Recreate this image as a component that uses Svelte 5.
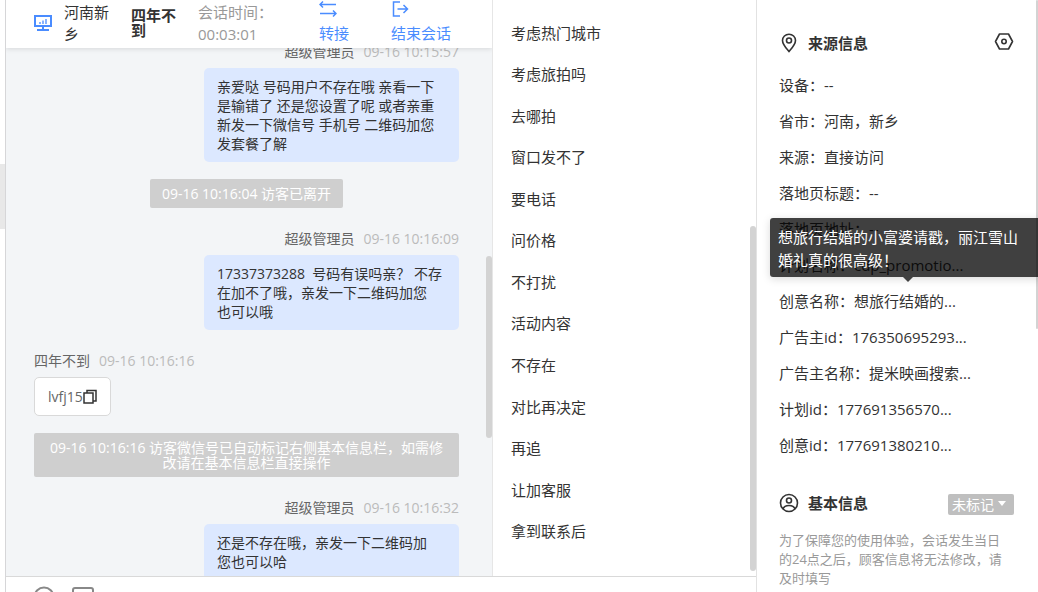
<script>
  let tag = $state('未标记')

  const messages = [
    { type: 'agent', name: '超级管理员', time: '09-16 10:15:57', text: '亲爱哒 号码用户不存在哦 亲看一下\n是输错了 还是您设置了呢 或者亲重\n新发一下微信号 手机号 二维码加您\n发套餐了解' },
    { type: 'notice', text: '09-16 10:16:04 访客已离开' },
    { type: 'agent', name: '超级管理员', time: '09-16 10:16:09', text: '17337373288\u00a0 号码有误吗亲？ 不存\n在加不了哦，亲发一下二维码加您\n也可以哦' },
    { type: 'visitor', name: '四年不到', time: '09-16 10:16:16', text: 'lvfj15' },
    { type: 'notice', wide: true, text: '09-16 10:16:16 访客微信号已自动标记右侧基本信息栏，如需修\n改请在基本信息栏直接操作' },
    { type: 'agent', name: '超级管理员', time: '09-16 10:16:32', text: '还是不存在哦，亲发一下二维码加\n您也可以哈' },
  ]

  const replies = [
    '考虑热门城市', '考虑旅拍吗', '去哪拍', '窗口发不了', '要电话', '问价格', '不打扰',
    '活动内容', '不存在', '对比再决定', '再追', '让加客服', '拿到联系后',
  ]

  const source = [
    { label: '设备', value: '--' },
    { label: '省市', value: '河南，新乡' },
    { label: '来源', value: '直接访问' },
    { label: '落地页标题', value: '--' },
    { label: '落地页地址', value: '--' },
    { label: '计划名称', value: 'cdp_promotio...' },
    { label: '创意名称', value: '想旅行结婚的...', tip: '想旅行结婚的小富婆请戳，丽江雪山\n婚礼真的很高级！' },
    { label: '广告主id', value: '176350695293...' },
    { label: '广告主名称', value: '提米映画搜索...' },
    { label: '计划id', value: '177691356570...' },
    { label: '创意id', value: '177691380210...' },
  ]
</script>

<div class="app" lang="zh-CN">
  <div class="rail"><span class="thumb"></span></div>

  <main class="main">
    <section class="chat">
      <header class="chat-head">
        <div class="place">
          <svg width="18" height="18" viewBox="0 0 18 18" fill="none" stroke="#4a8cff" stroke-width="2">
            <path d="M1 2h16v10H1z M9 12v4 M3 16h12" />
            <path d="M6 10V8 M9 10V6.500 M12 10V5" stroke-width="1.300" />
          </svg>
          <span>河南新乡</span>
        </div>
        <strong>四年不到</strong>
        <div class="duration">会话时间：<br />00:03:01</div>
        <button type="button">
          <svg width="18" height="16" viewBox="0 0 18 16" fill="none" stroke="currentColor" stroke-width="1.500">
            <path d="M17 3.500H1 M4 .5l-3 3 3 3 M1 12.500h16 M14 9.500l3 3-3 3" />
          </svg>
          转接
        </button>
        <button type="button">
          <svg width="18" height="16" viewBox="0 0 18 16" fill="none" stroke="currentColor" stroke-width="1.500">
            <path d="M9 1H2.500v14H9 M6.500 8H16 M12.500 4l4 4-4 4" />
          </svg>
          结束会话
        </button>
      </header>

      <div class="messages">
        {#each messages as m}
          {#if m.type === 'notice'}
            <p class="notice" class:wide={m.wide}>{m.text}</p>
          {:else}
            <article class={`message ${m.type}`}>
              <div class="meta"><span>{m.name}</span><time>{m.time}</time></div>
              <div class="bubble">
                {m.text}{#if m.type === 'visitor'}<button type="button" aria-label="复制">
                    <svg width="14" height="16" viewBox="0 0 14 16" fill="none" stroke="#333" stroke-width="1.500">
                      <path d="M1 4h9v10H1z M4 4V1.500h9V12h-3" />
                    </svg>
                  </button>{/if}
              </div>
            </article>
          {/if}
        {/each}
      </div>
      <span class="thumb"></span>
    </section>

    <section class="quick">
      <ul>
        {#each replies as r}
          <li><button type="button">{r}</button></li>
        {/each}
      </ul>
      <span class="thumb"></span>
    </section>

    <footer class="tools">
      <button type="button" aria-label="表情">
        <svg width="22" height="22" viewBox="0 0 22 22" fill="none" stroke="#888" stroke-width="2">
          <circle cx="11" cy="11" r="9.500" />
          <path d="M7 13q4 4 8 0" />
        </svg>
      </button>
      <button type="button" aria-label="图片">
        <svg width="22" height="22" viewBox="0 0 22 22" fill="none" stroke="#888" stroke-width="2">
          <rect x="1" y="2" width="20" height="18" rx="2" />
          <path d="M2 17l6-6 5 5 3-3 4 4" />
        </svg>
      </button>
    </footer>
  </main>

  <aside class="info">
    <div class="title">
      <svg width="20" height="20" viewBox="0 0 20 20" fill="none" stroke="#333" stroke-width="1.600">
        <path d="M10 18.500C7 15 3.500 11.500 3.500 7.500a6.500 6.300 0 0 1 13 0C16.500 11.500 13 15 10 18.500z" />
        <circle cx="10" cy="7.500" r="2.500" />
      </svg>
      <h2>来源信息</h2>
      <button type="button" aria-label="设置">
        <svg width="20" height="20" viewBox="0 0 20 20" fill="none" stroke="#333" stroke-width="1.600">
          <path d="M5.500 1h9L18.500 8.500l-4 7.500h-9L1.500 8.500z" stroke-linejoin="round" />
          <circle cx="10" cy="8.500" r="2.200" />
        </svg>
      </button>
    </div>

    <ul class="fields">
      {#each source as s}
        <li>
          {s.label}：{s.value}
          {#if s.tip}<div class="tip" role="tooltip">{s.tip}</div>{/if}
        </li>
      {/each}
    </ul>

    <div class="title">
      <svg width="20" height="20" viewBox="0 0 20 20" fill="none" stroke="#333" stroke-width="1.600">
        <circle cx="10" cy="10" r="8.500" />
        <circle cx="10" cy="7.500" r="2.500" />
        <path d="M4 16c1-3 3-3.500 6-3.500s5 .5 6 3.500" />
      </svg>
      <h2>基本信息</h2>
      <div class="tag">
        <select aria-label="标记" bind:value={tag}>
          <option>未标记</option>
          <option>已标记</option>
        </select>
        <svg width="10" height="6" viewBox="0 0 10 6"><path d="M1 0h8L5 5z" fill="#fff" /></svg>
      </div>
    </div>
    <p class="note">为了保障您的使用体验，会话发生当日<br />的24点之后，顾客信息将无法修改，请<br />及时填写</p>
    <span class="thumb"></span>
  </aside>
</div>

<style>
  :global(body) { background: #fff; }

  .app {
    display: grid;
    grid-template-columns: 6px minmax(0, 750fr) minmax(0, 282fr);
    height: 100vh;
    overflow: hidden;
    color: #333;
    font: 15px/22px "Open Sans", "Noto Sans CJK SC", sans-serif;
  }
  ul { list-style: none; margin: 0; padding: 0; }
  p, h2 { margin: 0; }
  svg { display: block; flex: none; }
  button { padding: 0; border: 0; background: none; color: inherit; font: inherit; cursor: pointer; }

  .thumb {
    position: absolute;
    right: 0;
    width: 6px;
    border-radius: 3px;
    background: #d3d3d3;
  }

  .rail { position: relative; border-right: 1px solid #d6d6d8; }
  .rail .thumb { top: 164px; height: 65px; width: 5px; border-radius: 0; background: #e8e8e8; }

  .main {
    display: grid;
    grid-template-columns: minmax(0, 486fr) minmax(0, 264fr);
    grid-template-rows: minmax(0, 1fr) 16px;
    min-height: 0;
  }

  .chat { position: relative; overflow: hidden; background: #f3f5f7; }
  .chat .thumb { top: 256px; height: 182px; }
  .chat-head {
    position: relative;
    z-index: 1;
    display: grid;
    grid-template-columns: 77px 47px 101px 52px auto;
    gap: 20px;
    align-items: center;
    height: 48px;
    padding: 0 0 3px 28px;
    box-sizing: border-box;
    background: #fff;
    box-shadow: 0 1px 5px rgba(0, 0, 0, .12);
  }
  .place { display: flex; align-items: center; gap: 12px; }
  .chat-head strong { line-height: 15px; }
  .duration { color: #999; }
  .chat-head button {
    display: grid;
    gap: 5px;
    color: #4a8cff;
    text-align: left;
  }

  .messages {
    display: flex;
    flex-direction: column;
    margin-top: -27px;
    padding: 0 33px 0 28px;
    font-size: 14px;
  }
  .message { display: flex; flex-direction: column; gap: 6px; margin-top: 21px; align-items: flex-start; }
  .agent { align-items: flex-end; }
  .meta { display: flex; gap: 9px; line-height: 20px; color: #666; }
  .meta time { color: #bbb; }
  .bubble {
    width: 255px;
    box-sizing: border-box;
    padding: 9px 13px;
    border-radius: 5px;
    background: #dce8ff;
    line-height: 19px;
    white-space: pre-line;
  }
  .visitor .bubble {
    display: flex;
    align-items: center;
    width: auto;
    border: 1px solid #d9d9d9;
    background: #fff;
    color: #666;
  }
  .notice {
    align-self: center;
    margin-top: 17px;
    padding: 7px 12px;
    border-radius: 2px;
    background: #cfcfcf;
    color: #fff;
    line-height: 15px;
    text-align: center;
    white-space: pre-line;
  }
  .notice.wide { align-self: stretch; }

  .quick { position: relative; border-left: 1px solid #e6e6e6; }
  .quick .thumb { top: 226px; height: 345px; }
  .quick ul {
    display: flex;
    flex-direction: column;
    height: 100%;
    box-sizing: border-box;
    padding: 12px 18px 24px;
  }
  .quick li { flex: 1; display: flex; align-items: center; }

  .tools {
    grid-column: 1 / -1;
    display: flex;
    align-items: flex-start;
    gap: 17px;
    padding: 9px 27px 0;
    overflow: hidden;
    border-top: 1px solid #d9d9d9;
    box-sizing: border-box;
  }

  .info {
    position: relative;
    padding: 32px 24px 0 22px;
    overflow: hidden;
    border-left: 1px solid #e2e2e2;
  }
  .info > .thumb { top: 0; height: 329px; width: 2px; }
  .title { display: flex; align-items: center; gap: 9px; height: 22px; }
  .title h2 { flex: 1; font-size: 15px; line-height: 22px; }
  .fields { margin: 13px 0 29px; line-height: 36px; }
  .fields li { position: relative; white-space: nowrap; }
  .tip {
    position: absolute;
    z-index: 2;
    left: -9px;
    bottom: calc(100% + 6px);
    width: 276px;
    box-sizing: border-box;
    padding: 8px 8px 5px;
    border-radius: 3px;
    background: rgba(0, 0, 0, .75);
    box-shadow: 0 2px 8px rgba(0, 0, 0, .15);
    color: #fff;
    line-height: 23px;
    white-space: pre-line;
  }
  .tip::after {
    content: '';
    position: absolute;
    top: 100%;
    left: calc(50% - 5px);
    border: 5px solid transparent;
    border-top-color: #404040;
    border-bottom: 0;
  }
  .tag { position: relative; height: 21px; }
  .tag select {
    width: 66px;
    height: 21px;
    padding: 0 4px;
    border: 0;
    border-radius: 2px;
    appearance: none;
    background: #bfbfbf;
    color: #fff;
    font: 14px/21px "Open Sans", "Noto Sans CJK SC", sans-serif;
  }
  .tag svg { position: absolute; right: 7px; top: 8px; pointer-events: none; }
  .note { margin-top: 17px; color: #999; font-size: 13px; line-height: 19px; }
</style>
